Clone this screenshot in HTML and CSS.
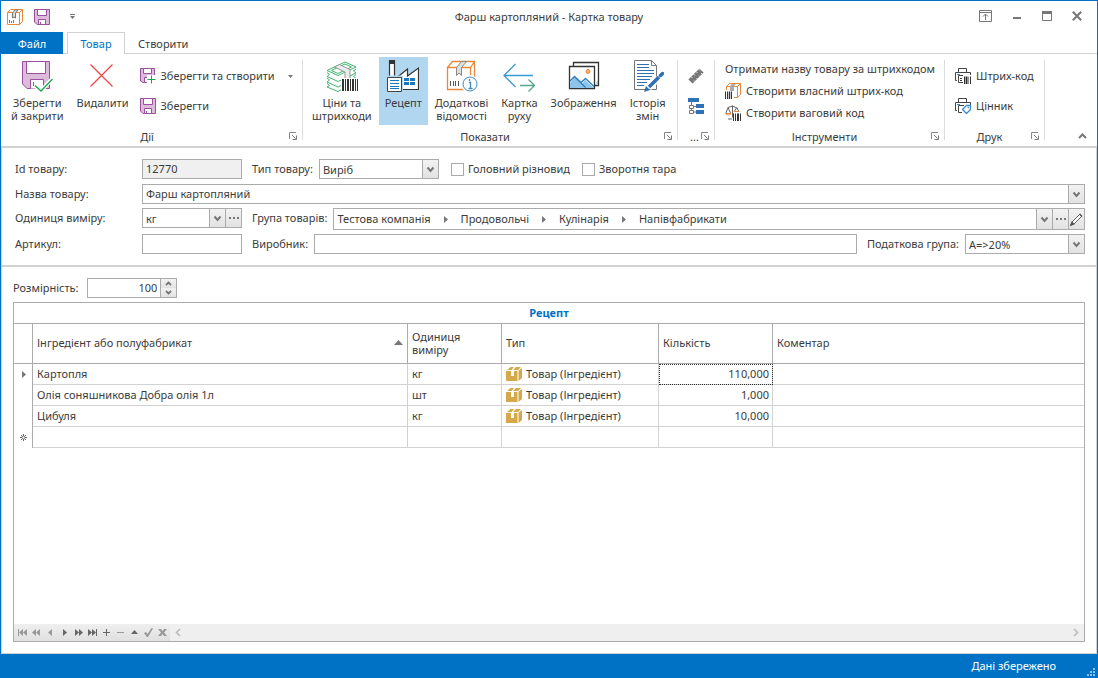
FILE: index.html
```html
<!DOCTYPE html>
<html lang="uk">
<head>
<meta charset="utf-8">
<title>Фарш картопляний - Картка товару</title>
<link rel="stylesheet" href="styles.css">
</head>
<body>
<svg class="defs" aria-hidden="true">
  <symbol id="floppy" viewBox="0 0 16 16"><path d="M.5.5h15v15H3L.5 13z" fill="#dcbcda" stroke="#9b4f9f"/><path d="M3.500.5h9v6h-9z" fill="#fff" stroke="#9b4f9f"/><path d="M4.500 10.500h7v5h-7z" fill="#fff" stroke="#9b4f9f"/><path d="M6.500 13v2" stroke="#9b4f9f"/></symbol>
  <symbol id="chev" viewBox="0 0 9 9"><path d="M1.500 2.500l3 3.500 3-3.500" fill="none" stroke="#777" stroke-width="2"/></symbol>
  <symbol id="dots" viewBox="0 0 12 4"><path d="M1 1h2v2H1zM5 1h2v2H5zM9 1h2v2H9z" fill="#777"/></symbol>
  <symbol id="launch" viewBox="0 0 8 8"><path d="M.5 7V.5H7" fill="none" stroke="#888"/><path d="M3 3l3.500 3.500M7.500 3.500v4h-4" fill="none" stroke="#777"/></symbol>
  <symbol id="crumb" viewBox="0 0 4 7"><path d="M0 0l4 3.500L0 7z" fill="#777"/></symbol>
  <symbol id="goods" viewBox="0 0 16 16"><path d="M0 5h5v5h3V5h3.500v10H0zM12.500 4.500L16 2v10l-3.500 3zM1 4l3.500-3H8L5.500 4zM7 4l3-3h5l-3 3z" fill="#d5a84b"/></symbol>
  <symbol id="printer" viewBox="0 0 16 16"><path d="M3.500 4V.5h8V4M2 12.500H.5v-8h15V7" fill="none" stroke="#444"/></symbol>
</svg>
<div class="window">
  <header class="titlebar">
    <div class="quick">
      <svg width="16" height="16" viewBox="0 0 16 16"><path d="M.5 3.500h12v12H.5zM.5 3.500l3-3h12l-3 3M15.500.5v12l-3 3" fill="#fff" stroke="#e8883a"/><path d="M5.500 4v5l1.500-1 1.500 1V4L11 .8H8L5.500 4" fill="#ddd" stroke="#777"/><path d="M2.500 11v3M4.500 12v2M6.500 11v3" stroke="#777"/></svg>
      <button class="plain" aria-label="Зберегти"><svg width="16" height="16"><use href="#floppy"/></svg></button>
      <button class="plain more" aria-label="Панель швидкого доступу"><svg width="5" height="5" viewBox="0 0 5 5"><path d="M0 0h5v1H0zM0 2h5L2.500 5z" fill="#777"/></svg></button>
    </div>
    <h1 class="title">Фарш картопляний - Картка товару</h1>
    <div class="sys">
      <button class="plain" aria-label="Стрічка"><svg width="13" height="12" viewBox="0 0 13 12"><path d="M.5.5h12v11H.5zM.5 2.500h12M6.500 10V4.500M4 6.500l2.500-2.500L9 6.500" fill="none" stroke="#777"/></svg></button>
      <button class="plain" aria-label="Згорнути"><svg width="10" height="12" viewBox="0 0 10 12"><path d="M1 7h8v2H1z" fill="#777"/></svg></button>
      <button class="plain" aria-label="Розгорнути"><svg width="10" height="12" viewBox="0 0 10 12"><path d="M.5 1.500h9v9H.5z" fill="none" stroke="#777"/><path d="M0 1h10v3H0z" fill="#777"/></svg></button>
      <button class="plain" aria-label="Закрити"><svg width="10" height="12" viewBox="0 0 10 12"><path d="M.8 1.800l8.400 8.400M9.200 1.800L.8 10.200" stroke="#777" stroke-width="2"/></svg></button>
    </div>
  </header>
  <nav class="tabs">
    <button class="tab file">Файл</button>
    <button class="tab active">Товар</button>
    <button class="tab">Створити</button>
  </nav>
  <section class="ribbon">
    <div class="group actions">
      <div class="items">
        <button class="big"><svg width="32" height="32" viewBox="0 0 32 32"><path d="M1.500 1.500h27v27H6l-4.500-4.500z" fill="#dcbcda" stroke="#9b4f9f"/><path d="M5.500 1.500h19v12h-19z" fill="#fff" stroke="#9b4f9f"/><path d="M9.500 28.500v-9h13v9" fill="#fff" stroke="#9b4f9f"/><path d="M12.500 22v4" stroke="#9b4f9f"/><path d="M14 25.500l6 5.500 11-12" fill="none" stroke="#fff" stroke-width="4"/><path d="M14 25.500l6 5.500 11.500-12" fill="none" stroke="#18a84c" stroke-width="1.300"/></svg><span>Зберегти<br>й закрити</span></button>
        <button class="big"><svg width="32" height="32" viewBox="0 0 32 32"><path d="M4.500 4.500l22 22M26.500 4.500l-22 22" stroke="#f04848" stroke-width="1.300"/></svg><span>Видалити</span></button>
        <div class="stack wide">
          <button class="small"><svg width="16" height="16" viewBox="0 0 16 16"><path d="M.5.5h14v14H3L.5 13z" fill="#dcbcda" stroke="#9b4f9f"/><path d="M3.500.5h8v5h-8zM4.500 9.500h5v5h-5z" fill="#fff" stroke="#9b4f9f"/><path d="M7 7h9v9H7z" fill="#fff"/><path d="M11.500 7.500v8M7.500 11.500h8" stroke="#18a84c"/></svg><span>Зберегти та створити</span><svg class="tail" width="5" height="3" viewBox="0 0 5 3"><path d="M0 0h5L2.500 3z" fill="#777"/></svg></button>
          <button class="small"><svg width="16" height="16"><use href="#floppy"/></svg><span>Зберегти</span></button>
        </div>
      </div>
      <footer class="caption"><span>Дії</span><button class="plain" aria-label="Дії: параметри"><svg width="8" height="8"><use href="#launch"/></svg></button></footer>
    </div>
    <div class="sep"></div>
    <div class="group show">
      <div class="items">
        <button class="big"><svg width="32" height="32" viewBox="0 0 32 32"><g fill="#fff" stroke="#3cb56b"><path d="M1 23.500l2.500 2L1 27l11 4.500 17-9.500-3-1.500"/><path d="M1 18l2.500 2L1 22l11 5 18-8.500-2.500-2L30 14.500"/><path d="M1 12.500l2.500 2L1 16.500l11 5L30 13l-2.500-2L30 9"/><path d="M1 10.500L19 2l11 5-18 8.500z"/><path d="M5.500 10.500L19 4l6.500 3L12 13.500z"/></g><path d="M8.500 7L19 12v10l5-2.500V9.500L13.500 4.500z" fill="#ececec" stroke="#999"/><path d="M15 18h17v14H15z" fill="#fff"/><path d="M16 19h2v12h-2zM19 19h1v12h-1zM21 19h2v12h-2zM24 19h1v12h-1zM26 19h2v12h-2zM29 19h1v12h-1zM31 19h1v12h-1z" fill="#333"/></svg><span>Ціни та<br>штрихкоди</span></button>
        <button class="big on"><svg width="32" height="32" viewBox="0 0 32 32"><path d="M2.500 30V.5h5v19L20.500 9v7L31.500 8v21.500h-16" fill="#fff" stroke="#333" stroke-width="1.200"/><path d="M2 0h6v4H2z" fill="#333"/><path d="M-1 15.500h17V32H-1z" fill="#b1d6f0"/><path d="M.5 17.500h14v14H.5z" fill="#fff" stroke="#444"/><path d="M3 20.500h9M3 23.500h9M3 26.500h9M3 28.500h9" stroke="#1d77bd"/><path d="M17 18h5v3h-5zM23 18h5v3h-5zM17 22h5v3h-5zM23 22h5v3h-5z" fill="#1d77bd"/></svg><span>Рецепт</span></button>
        <button class="big"><svg width="32" height="32" viewBox="0 0 32 32"><path d="M1.500 7.500h23v22h-23zM1.500 7.500l5-6h22l-4 6M28.500 1.500v22l-4 6" fill="#fff" stroke="#e8883a" stroke-width="1.300"/><path d="M10.500 15.500v-8l5-6h5l-5 6v8l-2.500-2.500z" fill="#ddd" stroke="#888"/><path d="M4.500 21v5M7.500 21v5M9.500 21v5M12.500 21v5" stroke="#555"/><circle cx="24" cy="24" r="9" fill="#fff"/><circle cx="24" cy="24" r="7" fill="#fff" stroke="#3a8cc8"/><path d="M23 22.500h1.500v5.500M22.500 28.500h4M23.500 19v2" fill="none" stroke="#3a8cc8" stroke-width="1.300"/></svg><span>Додаткові<br>відомості</span></button>
        <button class="big"><svg width="32" height="32" viewBox="0 0 32 32"><path d="M30 15.500H1M12.500 4L1 15.500 12.500 27" fill="none" stroke="#3a9ad9" stroke-width="1.300"/><path d="M17 25.500h14.500M25.500 19.500l6 6-6 6" fill="none" stroke="#58a98a" stroke-width="1.300"/></svg><span>Картка<br>руху</span></button>
        <button class="big"><svg width="32" height="32" viewBox="0 0 32 32"><path d="M5.500 6V2.500h25v23H27" fill="none" stroke="#333" stroke-width="1.300"/><path d="M28 23l2 2v-5z" fill="#8ec4ea"/><path d="M1.500 6.500h25v22h-25z" fill="#fff" stroke="#333" stroke-width="1.300"/><path d="M2 23l5-7 6 5 4 7H2z" fill="#8ec4ea"/><path d="M11 28l6-8 9 8z" fill="#8ec4ea"/><path d="M2 21l4.500-4.500 11 11M12.500 23l5-4.500 8.500 8" fill="none" stroke="#2d7fbd" stroke-width="1.300"/><circle cx="20" cy="11.500" r="2" fill="#f7b26b" stroke="#e8883a"/></svg><span>Зображення</span></button>
        <button class="big"><svg width="32" height="32" viewBox="0 0 32 32"><path d="M2.500.5h17l5 5v24h-22z" fill="#fff" stroke="#777"/><path d="M19.500.5v5h5" fill="none" stroke="#777"/><path d="M5 4.500h12M5 7.500h12M5 10.500h17M5 13.500h17M5 16.500h15M5 19.500h13M5 22.500h10M5 25.500h7" stroke="#2f6fb5" stroke-width="1.200"/><path d="M17 28L31 14" stroke="#fff" stroke-width="6"/><path d="M12 32l2-6 4 4z" fill="#2f6fb5"/><path d="M17 27L27 17" stroke="#2f6fb5" stroke-width="3.500"/><path d="M28.500 15.500l2-2" stroke="#2f6fb5" stroke-width="3.500" stroke-linecap="round"/></svg><span>Історія<br>змін</span></button>
      </div>
      <footer class="caption"><span>Показати</span><button class="plain" aria-label="Показати: параметри"><svg width="8" height="8"><use href="#launch"/></svg></button></footer>
    </div>
    <div class="sep"></div>
    <div class="group tiny">
      <div class="items"><div class="stack">
        <button class="small" aria-label="Властивості"><svg width="16" height="16" viewBox="0 0 16 16"><path d="M2.500 13.500l11-11" stroke="#777" stroke-width="6"/><path d="M3 8.500l1.500 1.500M5.500 6L7 7.500M8 3.500L9.500 5M10.500 1L12 2.500M6 12.500l1.500 1.500M8.500 10l1.500 1.500M11 7.500L12.500 9M13 5l1.500 1.500" stroke="#fff" stroke-width=".8"/></svg></button>
        <button class="small" aria-label="Структура"><svg width="16" height="16" viewBox="0 0 16 16"><path d="M0 0h11v4H0zM8 6h8v4H8zM8 12h8v4H8z" fill="#2f72b5"/><path d="M3.500 4v3M3.500 10v2M6 8.500h2M6 14h2" stroke="#777"/><path d="M1.500 7.500h4v3h-4zM1.500 12.500h4v3h-4z" fill="none" stroke="#777"/></svg></button>
      </div></div>
      <footer class="caption"><span>...</span><button class="plain" aria-label="Параметри"><svg width="8" height="8"><use href="#launch"/></svg></button></footer>
    </div>
    <div class="sep"></div>
    <div class="group tools">
      <div class="items"><div class="stack tight">
        <button class="small"><span>Отримати назву товару за штрихкодом</span></button>
        <button class="small"><svg width="16" height="16" viewBox="0 0 16 16"><path d="M1.500 7V3.500l3-3h11v11l-3 3H9M1.500 3.500h11v11M12.500 3.500l3-3" fill="none" stroke="#e8883a"/><path d="M5 8V3l2-2h4L9 3v5z" fill="#aaa"/><path d="M.5 8.500V16M2.500 8.500V16M6.500 8.500V16" stroke="#333"/><path d="M4.500 8.500V16" stroke="#333" stroke-width="1.500"/></svg><span>Створити власний штрих-код</span></button>
        <button class="small"><svg width="16" height="16" viewBox="0 0 16 16"><path d="M7.500.5v12M3 2.500l4.500-1.500L13 3.500M3 14h4M3 2.500L1 8M3 2.500L5.500 8M11.500 3L9 7M12 3l2 4" fill="none" stroke="#666"/><path d="M.5 8.500h5.500c-1 2-4.500 2-5.500 0zM9 6.500h5" fill="#fff" stroke="#e8883a"/><path d="M8.500 8.500V16M10.500 8.500V16M15.500 8.500V16" stroke="#333"/><path d="M13 8.500V16" stroke="#333" stroke-width="2"/></svg><span>Створити ваговий код</span></button>
      </div></div>
      <footer class="caption"><span>Інструменти</span><button class="plain" aria-label="Інструменти: параметри"><svg width="8" height="8"><use href="#launch"/></svg></button></footer>
    </div>
    <div class="sep"></div>
    <div class="group print">
      <div class="items"><div class="stack">
        <button class="small"><svg width="16" height="16" viewBox="0 0 16 16"><use href="#printer"/><path d="M8 14.500H3.500v-7H8" fill="none" stroke="#444"/><path d="M2 6.500h3" stroke="#3a8cc8"/><path d="M5 10.500h2M5 12.500h2M9.500 8.500V16M13 8.500V16M15.500 8.500V16" stroke="#333"/><path d="M11.300 8.500V16" stroke="#333" stroke-width="1.500"/></svg><span>Штрих-код</span></button>
        <button class="small"><svg width="16" height="16" viewBox="0 0 16 16"><use href="#printer"/><path d="M7 14.500H3.500v-7H9" fill="none" stroke="#444"/><path d="M2 6.500h3" stroke="#3a8cc8"/><path d="M7.500 11.500l4-4h4v4l-4 4z" fill="#fff" stroke="#3a8cc8" stroke-width="1.300"/><circle cx="13.300" cy="9.600" r=".8" fill="#3a8cc8"/></svg><span>Цінник</span></button>
      </div></div>
      <footer class="caption"><span>Друк</span><button class="plain" aria-label="Друк: параметри"><svg width="8" height="8"><use href="#launch"/></svg></button></footer>
    </div>
    <div class="sep"></div>
    <button class="plain collapse" aria-label="Згорнути стрічку"><svg width="9" height="6" viewBox="0 0 9 6"><path d="M1 5l3.500-3.500L8 5" fill="none" stroke="#777" stroke-width="2"/></svg></button>
  </section>
  <main class="content">
    <form class="form">
      <div class="line">
        <label class="name" for="id">Id товару:</label>
        <input class="box short" id="id" value="12770" readonly>
        <label for="kind">Тип товару:</label>
        <div class="box combo medium"><select id="kind"><option>Виріб</option></select><span class="cap"><svg width="9" height="9"><use href="#chev"/></svg></span></div>
        <label class="check"><input type="checkbox">Головний різновид</label>
        <label class="check"><input type="checkbox">Зворотня тара</label>
      </div>
      <div class="line">
        <label class="name" for="title">Назва товару:</label>
        <div class="box combo grow"><input id="title" value="Фарш картопляний"><button type="button" class="cap" aria-label="Відкрити"><svg width="9" height="9"><use href="#chev"/></svg></button></div>
      </div>
      <div class="line">
        <label class="name" for="unit">Одиниця виміру:</label>
        <div class="box combo short"><select id="unit"><option>кг</option></select><span class="cap"><svg width="9" height="9"><use href="#chev"/></svg></span><button type="button" class="cap" aria-label="Вибрати одиницю"><svg width="12" height="4"><use href="#dots"/></svg></button></div>
        <span id="group-label">Група товарів:</span>
        <div class="box combo grow tall" role="group" aria-labelledby="group-label">
          <div class="crumbs"><button type="button" class="plain">Тестова компанія</button><svg width="4" height="7"><use href="#crumb"/></svg><button type="button" class="plain">Продовольчі</button><svg width="4" height="7"><use href="#crumb"/></svg><button type="button" class="plain">Кулінарія</button><svg width="4" height="7"><use href="#crumb"/></svg><button type="button" class="plain">Напівфабрикати</button></div>
          <button type="button" class="cap" aria-label="Відкрити"><svg width="9" height="9"><use href="#chev"/></svg></button>
          <button type="button" class="cap" aria-label="Вибрати групу"><svg width="12" height="4"><use href="#dots"/></svg></button>
          <button type="button" class="cap" aria-label="Редагувати"><svg width="13" height="13" viewBox="0 0 13 13"><path d="M1 12l1-3L9.800 1.200l2 2L4 11z" fill="#fff" stroke="#666"/><path d="M9.500 1L12 3.500M1 12l1-2.500L3.500 11z" stroke="#555" stroke-width="1.500"/></svg></button>
        </div>
      </div>
      <div class="line">
        <label class="name" for="sku">Артикул:</label>
        <input class="box short" id="sku">
        <label for="maker">Виробник:</label>
        <input class="box grow" id="maker">
        <label for="tax">Податкова група:</label>
        <div class="box combo medium"><select id="tax"><option>А=&gt;20%</option></select><span class="cap"><svg width="9" height="9"><use href="#chev"/></svg></span></div>
      </div>
    </form>
    <section class="recipe">
      <div class="size">
        <label for="size">Розмірність:</label>
        <div class="box combo spin"><input id="size" value="100"><span class="steps"><button type="button" aria-label="Більше"><svg width="7" height="5" viewBox="0 0 7 5"><path d="M1 4l2.500-2.500L6 4" fill="none" stroke="#777" stroke-width="1.800"/></svg></button><button type="button" aria-label="Менше"><svg width="7" height="5" viewBox="0 0 7 5"><path d="M1 1l2.500 2.500L6 1" fill="none" stroke="#777" stroke-width="1.800"/></svg></button></span></div>
      </div>
      <div class="grid">
        <h2>Рецепт</h2>
        <table>
          <colgroup><col class="c-mark"><col class="c-item"><col class="c-unit"><col class="c-type"><col class="c-qty"><col></colgroup>
          <thead><tr><th aria-label="Стан"></th><th><div class="sorted">Інгредієнт або полуфабрикат<svg width="9" height="5" viewBox="0 0 9 5"><path d="M0 5l4.500-5L9 5z" fill="#777"/></svg></div></th><th>Одиниця<br>виміру</th><th>Тип</th><th>Кількість</th><th>Коментар</th></tr></thead>
          <tbody>
            <tr><td class="mark"><svg width="4" height="7"><use href="#crumb"/></svg></td><td>Картопля</td><td>кг</td><td><div class="kind"><svg width="16" height="16"><use href="#goods"/></svg>Товар (Інгредієнт)</div></td><td class="num focus">110,000</td><td></td></tr>
            <tr><td class="mark"></td><td>Олія соняшникова Добра олія 1л</td><td>шт</td><td><div class="kind"><svg width="16" height="16"><use href="#goods"/></svg>Товар (Інгредієнт)</div></td><td class="num">1,000</td><td></td></tr>
            <tr><td class="mark"></td><td>Цибуля</td><td>кг</td><td><div class="kind"><svg width="16" height="16"><use href="#goods"/></svg>Товар (Інгредієнт)</div></td><td class="num">10,000</td><td></td></tr>
            <tr><td class="mark"><svg width="7" height="7" viewBox="0 0 7 7"><path d="M3.500 0v7M0 3.500h7M1 1l5 5M6 1L1 6" stroke="#666"/><circle cx="3.500" cy="3.500" r="1.500" fill="#fff" stroke="#666" stroke-width=".8"/></svg></td><td></td><td></td><td></td><td></td><td></td></tr>
          </tbody>
        </table>
        <div class="navigator">
          <div class="nav-buttons">
            <button class="off" aria-label="Перший"><svg viewBox="0 0 11 9"><path d="M1 1h1v7H1zM2 4.500L6 1v7zM6 4.500L10 1v7z"/></svg></button>
            <button class="off" aria-label="Попередня сторінка"><svg viewBox="0 0 11 9"><path d="M1 4.500L5 1v7zM5 4.500L9 1v7z"/></svg></button>
            <button class="off" aria-label="Попередній"><svg viewBox="0 0 11 9"><path d="M3 4.500L7 1v7z"/></svg></button>
            <button aria-label="Наступний"><svg viewBox="0 0 11 9"><path d="M8 4.500L4 1v7z"/></svg></button>
            <button aria-label="Наступна сторінка"><svg viewBox="0 0 11 9"><path d="M6 4.500L2 1v7zM10 4.500L6 1v7z"/></svg></button>
            <button aria-label="Останній"><svg viewBox="0 0 11 9"><path d="M5 4.500L1 1v7zM9 4.500L5 1v7zM9 1h1v7H9z"/></svg></button>
            <button aria-label="Додати"><svg viewBox="0 0 11 9"><path d="M2 4h7v1H2zM5 1h1v7H5z"/></svg></button>
            <button class="off" aria-label="Вилучити"><svg viewBox="0 0 11 9"><path d="M2 4h7v1H2z"/></svg></button>
            <button aria-label="Змінити"><svg viewBox="0 0 11 9"><path d="M2 6l3.500-4L9 6z"/></svg></button>
            <button class="off" aria-label="Прийняти"><svg viewBox="0 0 11 9"><path d="M1 5l2-1 1.500 2L8.500 0 10 .5 5 9H4z"/></svg></button>
            <button class="off" aria-label="Скасувати"><svg viewBox="0 0 11 9"><path d="M1 1h3l1.500 2L7 1h3L7 4.500 10 8H7L5.500 6 4 8H1l3-3.500z"/></svg></button>
          </div>
          <div class="scroll"><svg width="6" height="9" viewBox="0 0 6 9"><path d="M5 1L1.500 4.500 5 8" fill="none" stroke="#bbb" stroke-width="1.600"/></svg><svg width="6" height="9" viewBox="0 0 6 9"><path d="M1 1l3.500 3.500L1 8" fill="none" stroke="#bbb" stroke-width="1.600"/></svg></div>
        </div>
      </div>
    </section>
  </main>
  <footer class="status"><span>Дані збережено</span><svg width="8" height="8" viewBox="0 0 8 8"><path d="M6 0h2v2H6zM3 3h2v2H3zM6 3h2v2H6zM0 6h2v2H0zM3 6h2v2H3zM6 6h2v2H6z" fill="#8fc1e8"/></svg></footer>
</div>
</body>
</html>
```
FILE: styles.css
```css
* { box-sizing: border-box; }
body { margin: 0; font: 11px/13px "Noto Sans", "Open Sans", sans-serif; color: #3b3b3b; background: #fff; }
button, input, select { font: inherit; color: inherit; margin: 0; padding: 0; border: 0; background: none; border-radius: 0; }
svg { display: block; flex: none; }
.defs { position: absolute; width: 0; height: 0; }
.plain { display: block; }
.window { display: flex; flex-direction: column; min-height: 100vh; border: 1px solid #0072c6; }

.titlebar { display: grid; grid-template-columns: 1fr auto 1fr; align-items: center; height: 31px; }
.quick { display: flex; align-items: center; gap: 11px; padding-left: 6px; }
.quick .more { margin-left: 9px; }
.title { margin: 0; padding-bottom: 1px; font-size: 11px; font-weight: 400; }
.sys { display: flex; justify-content: flex-end; align-items: center; gap: 20px; padding: 0 15px 1px 0; }

.tabs { display: flex; height: 22px; border-bottom: 1px solid #d2d2d2; }
.tab { height: 22px; padding: 0 12px; border: 1px solid transparent; border-bottom: 0; }
.tab.file { width: 62px; padding: 0; margin-right: 4px; background: #0072c6; color: #fff; }
.tab.active { width: 58px; padding: 0; border-color: #d2d2d2; background: #fff; color: #0072c6; }

.ribbon { display: flex; height: 94px; border-bottom: 2px solid #d2d2d2; }
.sep { width: 1px; margin: 6px 0; background: #dcdcdc; flex: none; }
.group { display: flex; flex-direction: column; padding: 3px 3px 0; flex: none; }
.items { display: flex; gap: 1px; height: 70px; }
.big { display: flex; flex-direction: column; align-items: center; gap: 4px; height: 68px; padding: 3px 6px 0; white-space: nowrap; }
.big.on { background: #b1d6f0; }
.stack { display: flex; flex-direction: column; gap: 8px; padding-top: 8px; }
.stack.tight { gap: 0; padding-top: 1px; }
.small { display: flex; align-items: center; gap: 5px; height: 22px; white-space: nowrap; }
.small span { padding-bottom: 2px; }
.small .tail { margin-left: 8px; }
.actions { width: 301px; padding-left: 4px; }
.wide { padding-left: 4px; }
.show { width: 374px; }
.tiny { padding: 3px 0 0 10px; width: 36px; }
.tools { width: 229px; padding-left: 10px; }
.print { width: 99px; padding-left: 10px; }
.caption { display: flex; align-items: center; justify-content: flex-end; height: 14px; margin-top: 2px; padding-right: 2px; }
.caption span { flex: 1; text-align: center; }
.tools .caption, .print .caption { margin-left: -7px; }
.tiny .caption { padding-right: 5px; }
.collapse { align-self: flex-end; margin: 0 10px 7px auto; }

.content { flex: 1; display: flex; flex-direction: column; border: 1px solid #d2d2d2; border-top: 0; }
.form { display: grid; grid-template-rows: 21px 20px 22px 20px; gap: 4px; padding: 11px 11px 11px 13px; border-bottom: 2px solid #d2d2d2; }
.line { display: flex; align-items: flex-start; gap: 10px; line-height: 20px; }
.line > label:not(.name) + .box, #group-label + .box { margin-left: -4px; }
.name { width: 117px; }
.box { height: 20px; border: 1px solid #ababab; background: #fff; padding: 0 3px; min-width: 0; }
.short { width: 100px; }
.medium { width: 120px; }
.grow { flex: 1; }
.tall { height: 22px; }
.box[readonly] { background: #f0f0f0; }
.combo { display: flex; padding: 0; }
.combo > select, .combo > input, .crumbs { flex: 1; min-width: 0; width: 0; padding-left: 3px; appearance: none; }
.crumbs { display: flex; align-items: center; gap: 13px; }
.cap { display: flex; align-items: center; justify-content: center; width: 16px; border-left: 1px solid #ababab; background: linear-gradient(#f2f2f2, #e2e2e2); }
.check { display: flex; align-items: center; gap: 4px; margin-left: 2px; }
.check input { appearance: none; width: 13px; height: 13px; border: 1px solid #ababab; }

.recipe { flex: 1; display: flex; flex-direction: column; gap: 4px; padding: 11px; }
.size { display: flex; align-items: center; gap: 9px; }
.size label { padding-bottom: 2px; }
.spin { width: 90px; }
.spin > input { text-align: right; padding: 0 3px 2px; }
.steps { display: flex; flex-direction: column; width: 16px; border-left: 1px solid #ababab; }
.steps button { flex: 1; display: flex; align-items: center; justify-content: center; background: linear-gradient(#f2f2f2, #e2e2e2); }

.grid { flex: 1; display: flex; flex-direction: column; border: 1px solid #ababab; }
.grid h2 { margin: 0; height: 21px; font-size: 11px; line-height: 20px; text-align: center; color: #0072c6; border-bottom: 1px solid #ababab; }
table { width: 100%; table-layout: fixed; border-collapse: separate; border-spacing: 0; }
.c-mark { width: 19px; }
.c-item { width: 375px; }
.c-unit { width: 94px; }
.c-type { width: 157px; }
.c-qty { width: 114px; }
th { height: 40px; padding: 0 4px 2px; font-weight: 400; text-align: left; border-right: 1px solid #ababab; border-bottom: 1px solid #ababab; }
td { height: 21px; padding: 0 4px 2px; border-right: 1px solid #d2d2d2; border-bottom: 1px solid #d2d2d2; }
th:last-child, td:last-child { border-right: 0; }
.sorted { display: flex; align-items: center; justify-content: space-between; }
.mark { padding: 0 0 0 8px; border-right-color: #ababab; border-bottom: 0; }
tr:last-child .mark { padding-left: 6px; }
.kind { display: flex; align-items: center; gap: 4px; height: 16px; }
.kind svg { margin-top: 2px; }
.num { text-align: right; padding-right: 3px; }
.focus { outline: 1px dotted #333; outline-offset: -1px; }
.navigator { display: flex; height: 17px; margin-top: auto; }
.nav-buttons { display: flex; padding-left: 2px; background: linear-gradient(#efefef, #e0e0e0); }
.nav-buttons button { display: flex; align-items: center; padding: 0 2px 0 1px; }
.nav-buttons svg { width: 11px; height: 9px; fill: #666; }
.nav-buttons .off svg { fill: #999; }
.scroll { flex: 1; display: flex; align-items: center; justify-content: space-between; padding: 0 5px; background: #efefef; }

.status { display: flex; align-items: center; justify-content: flex-end; height: 23px; padding-right: 2px; background: #0072c6; color: #fff; }
.status svg { margin: 12px 0 0 31px; }
```
